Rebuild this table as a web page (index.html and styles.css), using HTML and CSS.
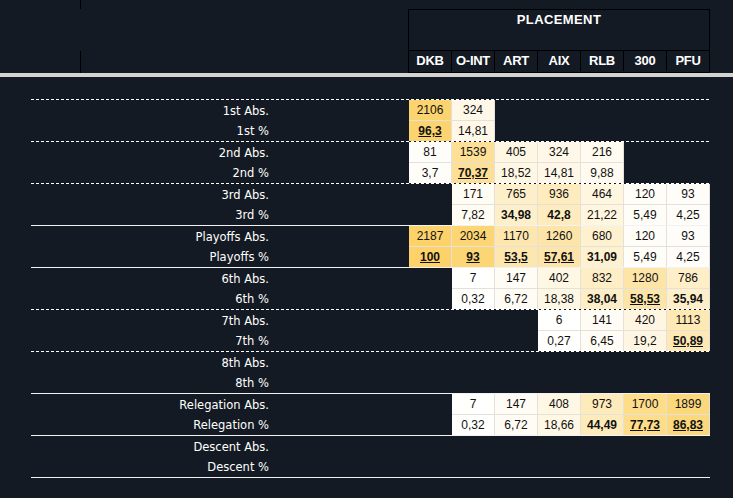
FILE: index.html
```html
<!DOCTYPE html>
<html>
<head>
<meta charset="utf-8">
<link rel="stylesheet" href="styles.css">
</head>
<body>
<div class="head">
  <div class="vl-top"></div>
  <div class="vl-bot"></div>
  <div class="box">
    <div class="title">PLACEMENT</div>
    <div class="cols"><div>DKB</div><div>O-INT</div><div>ART</div><div>AIX</div><div>RLB</div><div>300</div><div>PFU</div></div>
  </div>
</div>
<div class="bar"></div>
<div class="gap"></div>
<div class="table">
  <div class="rule dashed"></div>
  <div class="row r1"><div class="lbl">1st Abs.</div><div class="c f" style="background:#fcd46f">2106</div><div class="c f" style="background:#fff8e9">324</div><div class="c"></div><div class="c"></div><div class="c"></div><div class="c"></div><div class="c"></div></div>
  <div class="row r2"><div class="lbl">1st %</div><div class="c f u" style="background:#fcd46f">96,3</div><div class="c f" style="background:#fff8e9">14,81</div><div class="c"></div><div class="c"></div><div class="c"></div><div class="c"></div><div class="c"></div></div>

  <div class="rule dashed"></div>
  <div class="row r1"><div class="lbl">2nd Abs.</div><div class="c f" style="background:#fffdfa">81</div><div class="c f" style="background:#fddf95">1539</div><div class="c f" style="background:#fef7e3">405</div><div class="c f" style="background:#fff8e9">324</div><div class="c f" style="background:#fffbf0">216</div><div class="c"></div><div class="c"></div></div>
  <div class="row r2"><div class="lbl">2nd %</div><div class="c f" style="background:#fffdfa">3,7</div><div class="c f u" style="background:#fddf95">70,37</div><div class="c f" style="background:#fef7e3">18,52</div><div class="c f" style="background:#fff8e9">14,81</div><div class="c f" style="background:#fffbf0">9,88</div><div class="c"></div><div class="c"></div></div>

  <div class="rule dashed"></div>
  <div class="row r1"><div class="lbl">3rd Abs.</div><div class="c"></div><div class="c f" style="background:#fffcf3">171</div><div class="c f" style="background:#feefcb">765</div><div class="c f" style="background:#feecbf">936</div><div class="c f" style="background:#fef6df">464</div><div class="c f" style="background:#fffdf7">120</div><div class="c f" style="background:#fffdf9">93</div></div>
  <div class="row r2"><div class="lbl">3rd %</div><div class="c"></div><div class="c f" style="background:#fffcf3">7,82</div><div class="c f b" style="background:#feefcb">34,98</div><div class="c f b" style="background:#feecbf">42,8</div><div class="c f" style="background:#fef6df">21,22</div><div class="c f" style="background:#fffdf7">5,49</div><div class="c f" style="background:#fffdf9">4,25</div></div>

  <div class="rule solid"></div>
  <div class="row r1"><div class="lbl">Playoffs Abs.</div><div class="c f" style="background:#fcd269">2187</div><div class="c f" style="background:#fcd574">2034</div><div class="c f" style="background:#fde7af">1170</div><div class="c f" style="background:#fde5a9">1260</div><div class="c f" style="background:#fef1d0">680</div><div class="c f" style="background:#fffdf7">120</div><div class="c f" style="background:#fffdf9">93</div></div>
  <div class="row r2"><div class="lbl">Playoffs %</div><div class="c f u" style="background:#fcd269">100</div><div class="c f u" style="background:#fcd574">93</div><div class="c f u" style="background:#fde7af">53,5</div><div class="c f u" style="background:#fde5a9">57,61</div><div class="c f b" style="background:#fef1d0">31,09</div><div class="c f" style="background:#fffdf7">5,49</div><div class="c f" style="background:#fffdf9">4,25</div></div>

  <div class="rule solid"></div>
  <div class="row r1"><div class="lbl">6th Abs.</div><div class="c"></div><div class="c f" style="background:#fffffe">7</div><div class="c f" style="background:#fffcf5">147</div><div class="c f" style="background:#fef7e4">402</div><div class="c f" style="background:#feeec6">832</div><div class="c f" style="background:#fde5a7">1280</div><div class="c f" style="background:#feefc9">786</div></div>
  <div class="row r2"><div class="lbl">6th %</div><div class="c"></div><div class="c f" style="background:#fffffe">0,32</div><div class="c f" style="background:#fffcf5">6,72</div><div class="c f" style="background:#fef7e4">18,38</div><div class="c f b" style="background:#feeec6">38,04</div><div class="c f u" style="background:#fde5a7">58,53</div><div class="c f b" style="background:#feefc9">35,94</div></div>

  <div class="rule dashed"></div>
  <div class="row r1"><div class="lbl">7th Abs.</div><div class="c"></div><div class="c"></div><div class="c"></div><div class="c f" style="background:#fffffe">6</div><div class="c f" style="background:#fffcf5">141</div><div class="c f" style="background:#fef6e2">420</div><div class="c f" style="background:#fee8b3">1113</div></div>
  <div class="row r2"><div class="lbl">7th %</div><div class="c"></div><div class="c"></div><div class="c"></div><div class="c f" style="background:#fffffe">0,27</div><div class="c f" style="background:#fffcf5">6,45</div><div class="c f" style="background:#fef6e2">19,2</div><div class="c f u" style="background:#fee8b3">50,89</div></div>

  <div class="rule dashed"></div>
  <div class="row r1"><div class="lbl">8th Abs.</div><div class="c"></div><div class="c"></div><div class="c"></div><div class="c"></div><div class="c"></div><div class="c"></div><div class="c"></div></div>
  <div class="row r2"><div class="lbl">8th %</div><div class="c"></div><div class="c"></div><div class="c"></div><div class="c"></div><div class="c"></div><div class="c"></div><div class="c"></div></div>

  <div class="rule solid"></div>
  <div class="row r1"><div class="lbl">Relegation Abs.</div><div class="c"></div><div class="c f" style="background:#fffffe">7</div><div class="c f" style="background:#fffcf5">147</div><div class="c f" style="background:#fef7e3">408</div><div class="c f" style="background:#feebbc">973</div><div class="c f" style="background:#fddc8a">1700</div><div class="c f" style="background:#fcd87d">1899</div></div>
  <div class="row r2"><div class="lbl">Relegation %</div><div class="c"></div><div class="c f" style="background:#fffffe">0,32</div><div class="c f" style="background:#fffcf5">6,72</div><div class="c f" style="background:#fef7e3">18,66</div><div class="c f b" style="background:#feebbc">44,49</div><div class="c f u" style="background:#fddc8a">77,73</div><div class="c f u" style="background:#fcd87d">86,83</div></div>

  <div class="rule solid"></div>
  <div class="row r1"><div class="lbl">Descent Abs.</div><div class="c"></div><div class="c"></div><div class="c"></div><div class="c"></div><div class="c"></div><div class="c"></div><div class="c"></div></div>
  <div class="row r2"><div class="lbl">Descent %</div><div class="c"></div><div class="c"></div><div class="c"></div><div class="c"></div><div class="c"></div><div class="c"></div><div class="c"></div></div>
  <div class="rule solid"></div>
</div>
</body>
</html>
```
FILE: styles.css
```css
* { box-sizing: border-box; }
html, body { margin: 0; padding: 0; }
body {
  background: #141a23;
  width: 733px;
  height: 498px;
  overflow: hidden;
}
.head {
  display: grid;
  grid-template-columns: 80px 328px 302px;
  grid-template-rows: 9px 42px 22px;
}
.vl-top { grid-column: 2; grid-row: 1; border-left: 1px solid #000; }
.vl-bot { grid-column: 2; grid-row: 3; border-left: 1px solid #000; }
.box {
  grid-column: 3;
  grid-row: 2 / 4;
  border: 1px solid #000;
  display: flex;
  flex-direction: column;
}
.title {
  height: 41px;
  border-bottom: 1px solid #000;
  color: #fff;
  font-family: "Liberation Sans", Arial, sans-serif;
  font-weight: bold;
  font-size: 13px;
  line-height: 20px;
  letter-spacing: 0.4px;
  text-align: center;
}
.cols { display: flex; height: 20px; }
.cols div {
  width: 43px;
  border-left: 1px solid #000;
  color: #fff;
  font-family: "Liberation Sans", Arial, sans-serif;
  font-weight: bold;
  font-size: 13px;
  line-height: 20px;
  letter-spacing: -0.3px;
  text-align: center;
  white-space: nowrap;
}
.cols div:first-child { width: 42px; border-left: 0; }
.bar { height: 4px; background: #d3d3d3; }
.gap { height: 22px; }
.table { margin-left: 31px; width: 679px; }
.rule { height: 1px; }
.rule.dashed { background: repeating-linear-gradient(to right, #ffffff 0 3px, transparent 3px 5px); }
.rule.solid { background: #f2f2f2; }
.row {
  display: grid;
  grid-template-columns: 378px repeat(7, 43px);
}
.r1 { height: 21px; }
.r2 { height: 20px; }
.lbl {
  font-family: "DejaVu Sans", Verdana, sans-serif;
  font-size: 11.5px;
  color: #fff;
  padding-right: 140px;
  display: flex;
  align-items: center;
  justify-content: flex-end;
  white-space: nowrap;
}
.c {
  border-right: 1px solid transparent;
  font-family: "Liberation Sans", Arial, sans-serif;
  font-size: 12px;
  color: #111;
  display: flex;
  align-items: center;
  justify-content: center;
}
.r1 .c { border-bottom: 1px solid transparent; }
.c.f { border-right-color: #e6e1d8; }
.r1 .c.f { border-bottom-color: #e6e1d8; }
.b { font-weight: bold; }
.u { font-weight: bold; text-decoration: underline; }
```
